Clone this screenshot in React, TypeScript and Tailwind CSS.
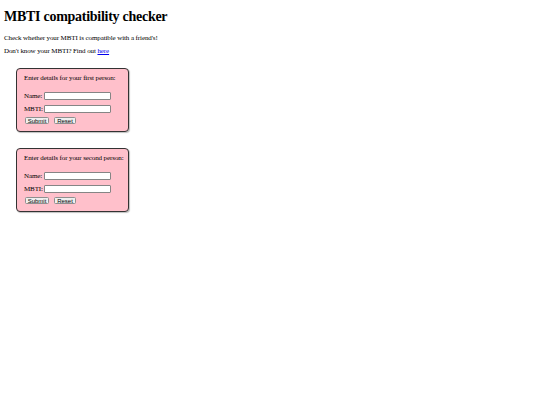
import React from "react";

const sans = { fontFamily: '"Liberation Sans", Arial, sans-serif' };

function PersonBox({ which }: { which: string }) {
  return (
    <div className="ml-[12px] w-[113px] rounded-[4px] border border-[#333] bg-[#ffc0cb] pl-[7px] pt-[4.6px] pb-[7px] shadow-[1px_1px_1px_rgba(0,0,0,0.25)]">
      <p className="text-[7px] leading-[8px] tracking-[-0.1px] whitespace-nowrap">Enter details for your {which} person:</p>
      <div className="mt-[10.4px] flex items-center h-[8px]">
        <span className="text-[7px] leading-[8px] tracking-[-0.1px] w-[20px] whitespace-nowrap">Name:</span>
        <div className="h-[8px] w-[67px] border border-[#858585] bg-white rounded-[1px]" />
      </div>
      <div className="mt-[5px] flex items-center h-[8px]">
        <span className="text-[7px] leading-[8px] tracking-[-0.1px] w-[20px] whitespace-nowrap">MBTI:</span>
        <div className="h-[8px] w-[67px] border border-[#858585] bg-white rounded-[1px]" />
      </div>
      <div className="mt-[4px] flex items-center gap-[5px] pl-[1px]">
        <div className="h-[7px] w-[24px] flex items-center justify-center border border-[#8f8f8f] bg-[#efefef] rounded-[1.5px] text-[6px] leading-none" style={sans}>Submit</div>
        <div className="h-[7px] w-[22px] flex items-center justify-center border border-[#8f8f8f] bg-[#efefef] rounded-[1.5px] text-[6px] leading-none" style={sans}>Reset</div>
      </div>
    </div>
  );
}

export default function App() {
  return (
    <div className="w-[540px] h-[405px] bg-white text-black px-[4px] pt-[9.25px]" style={{ fontFamily: '"Liberation Serif", "Times New Roman", serif' }}>
      <h1 className="text-[14px] font-bold leading-[16px] tracking-[-0.27px] whitespace-nowrap">MBTI compatibility checker</h1>
      <p className="mt-[8.4px] text-[7px] leading-[8px] tracking-[-0.1px]">Check whether your MBTI is compatible with a friend's!</p>
      <p className="mt-[5px] text-[7px] leading-[8px] tracking-[-0.1px]">Don't know your MBTI? Find out <a href="#" className="text-[#0000ee] underline">here</a></p>
      <div className="mt-[13.4px]">
        <PersonBox which="first" />
      </div>
      <div className="mt-[16px]">
        <PersonBox which="second" />
      </div>
    </div>
  );
}
